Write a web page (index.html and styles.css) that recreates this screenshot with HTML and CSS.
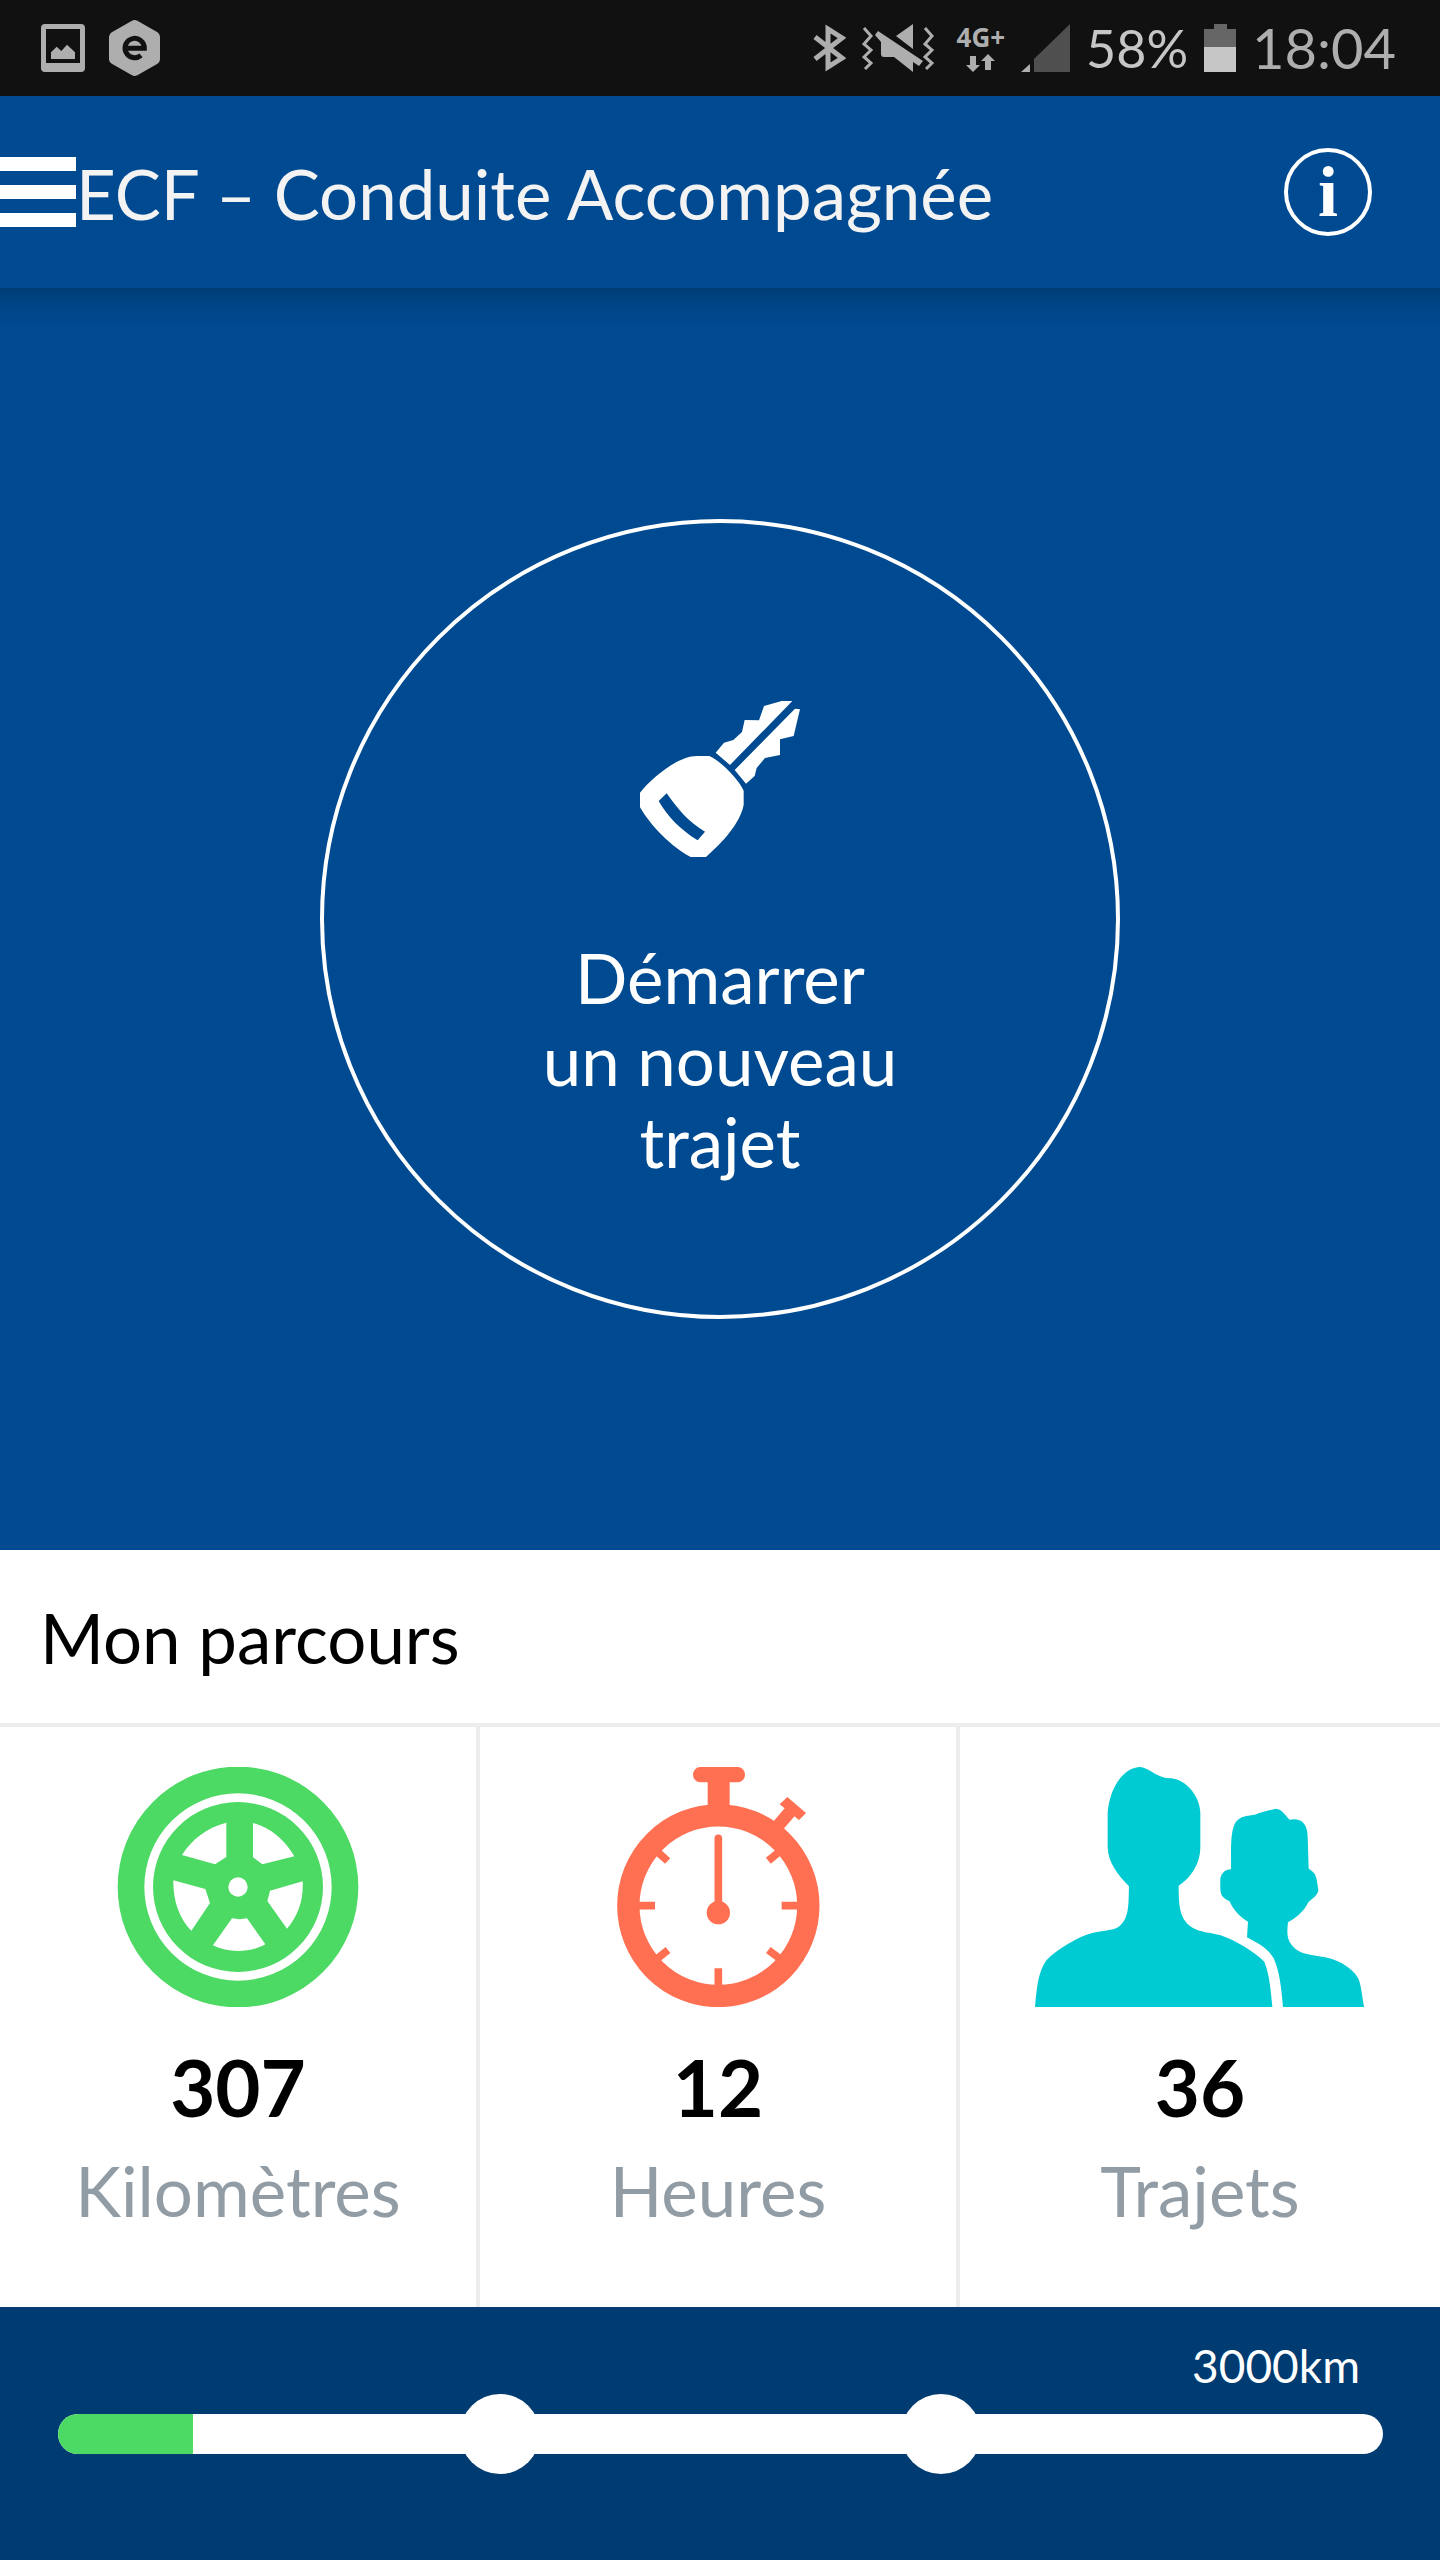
FILE: index.html
```html
<!DOCTYPE html>
<html lang="fr">
<head>
<meta charset="utf-8">
<meta name="viewport" content="width=device-width, initial-scale=1">
<title>ECF – Conduite Accompagnée</title>
<link rel="stylesheet" href="styles.css">
</head>
<body>
<div class="status">
  <div class="status-group status-left">
    <svg width="44" height="48" viewBox="123 72 132 144" aria-hidden="true">
      <path fill="#aeaeae" fill-rule="evenodd" d="M135 72H243Q255 72 255 84V204Q255 216 243 216H135Q123 216 123 204V84Q123 72 135 72ZM138 87V189H240V87Z"/>
      <path fill="#aeaeae" d="M153 177V157L170 140L184 153L201 134L225 157V177Z"/>
    </svg>
    <svg width="51" height="56" viewBox="327 60 153 168" aria-hidden="true">
      <path fill="#aeaeae" d="M396 62Q404 58 412 62L470 95Q480 101 480 112V176Q480 187 470 193L412 226Q404 230 396 226L338 193Q327 187 327 176V112Q327 101 338 95Z"/>
      <path fill="none" stroke="#111" stroke-width="15" d="M383 145H433A29 29 0 1 0 423 166"/>
    </svg>
  </div>
  <div class="status-group status-right">
    <svg width="33" height="48" viewBox="0 0 33 48" aria-hidden="true">
      <path fill="none" stroke="#aeaeae" stroke-width="5" d="M2 13L29 34L15 43V5L29 14L2 35"/>
    </svg>
    <svg width="73" height="48" viewBox="0 0 73 48" aria-hidden="true">
      <path fill="none" stroke="#aeaeae" stroke-width="3" d="M2 4L9 12L2 20L9 26L2 33L9 39L3 45M63 4L70 12L63 20L70 26L63 33L70 39L64 45"/>
      <path fill="#aeaeae" d="M51 0V25L34 12ZM16 7L61 37L57 42L51 38V48L32 33H22Q19 33 19 30V18L13 11Z"/>
    </svg>
    <div class="network">
      <span class="network-type">4G+</span>
      <svg width="29" height="18" viewBox="0 0 29 18" aria-hidden="true">
        <path fill="#aeaeae" d="M4 2H10V11H14L7 18L0 11H4ZM22 0L29 7H25V16H19V7H15Z"/>
      </svg>
    </div>
    <svg width="49" height="48" viewBox="0 0 49 48" aria-hidden="true">
      <path fill="#4f4f4f" d="M49 0V48H13V35Z"/><path fill="#aeaeae" d="M0 48L9 40V48Z"/>
    </svg>
    <span class="battery-level">58%</span>
    <svg width="32" height="48" viewBox="0 0 32 48" aria-hidden="true">
      <path fill="#666" d="M10 0H23V5H32V24H0V5H10Z"/><path fill="#c6c6c6" d="M0 23H32V48H0Z"/>
    </svg>
    <time class="clock">18:04</time>
  </div>
</div>

<header class="appbar">
  <button class="menu" type="button" aria-label="Menu">
    <svg width="76" height="70" viewBox="0 0 76 70" aria-hidden="true"><path fill="#fff" d="M0 0H76V14H0ZM0 28H76V42H0ZM0 56H76V70H0Z"/></svg>
  </button>
  <h1 class="title">ECF – Conduite Accompagnée</h1>
  <button class="info" type="button" aria-label="Informations">i</button>
</header>

<main class="main">
  <section class="hero">
    <button class="start" type="button">
      <svg width="160" height="156" viewBox="120 93 480 468" aria-hidden="true">
        <path fill="#fff" fill-rule="evenodd" d="M120 368C150 330 230 258 290 258H328C355 268 415 325 431 362V405C420 460 370 515 318 561H272C215 532 150 465 120 412ZM200 370L176 393C205 442 240 478 293 511L315 485C265 455 235 420 200 370Z"/>
        <path fill="#fff" d="M347 248L372 218L400 210L426 186L434 150L477 151L492 108L545 93H577L390 285ZM404 300L585 116L600 118L581 198L540 208V255L495 264L470 294L464 318L438 341Z"/>
      </svg>
      <span class="start-label">Démarrer<br>un nouveau<br>trajet</span>
    </button>
  </section>

  <section class="journey">
    <h2 class="journey-title">Mon parcours</h2>
    <ul class="stats">
      <li class="stat">
        <svg width="242" height="240" viewBox="52 51 726 720" aria-hidden="true">
          <circle cx="415" cy="411" r="321" fill="none" stroke="#4cd964" stroke-width="80"/>
          <circle cx="415" cy="411" r="255" fill="#4cd964"/>
          <path fill="#fff" d="M380 218V321L346 343L247 315C275 270 320 233 380 218ZM460 219C510 232 555 268 584 319L488 343L460 322ZM221 391L317 417L331 459L275 542C238 505 220 450 221 391ZM609 394C612 450 595 498 562 536L503 453L511 422ZM397 505Q420 510 442 505L497 583C450 609 385 609 340 586Z"/>
          <circle cx="415" cy="411" r="29" fill="#fff"/>
        </svg>
        <strong class="stat-value">307</strong>
        <span class="stat-label">Kilomètres</span>
      </li>
      <li class="stat">
        <svg width="204" height="240" viewBox="81 51 612 720" aria-hidden="true">
          <g fill="none" stroke="#ff7052">
            <ellipse cx="388" cy="467" rx="270" ry="271" stroke-width="67"/>
            <path stroke-width="23" d="M150 467H198M578 467H628M388 655V710M207 307L236 333M570 306L538 332M207 624L237 600M570 624L538 600"/>
            <path stroke-width="23" stroke-linecap="round" d="M388 265V480"/>
            <path stroke-width="38" d="M568 226L606 182"/>
          </g>
          <path fill="#ff7052" d="M334 51H446A22 23 0 0 1 446 97H422V180H356V97H334A22 23 0 0 1 334 51ZM595 141L651 189L630 210L572 163Z"/>
          <circle cx="388" cy="488" r="35" fill="#ff7052"/>
        </svg>
        <strong class="stat-value">12</strong>
        <span class="stat-label">Heures</span>
      </li>
      <li class="stat">
        <svg width="330" height="240" viewBox="78 51 990 720" aria-hidden="true">
          <path fill="#00cad2" d="M78 771C84 710 87 665 113 630C145 597 205 561 250 549C290 540 315 542 332 528C362 502 358 460 360 409C325 372 296 335 296 290V190C300 120 340 51 395 51C425 57 445 83 480 85C530 84 574 140 574 190V290C574 345 542 385 509 407C509 450 510 490 530 515C555 548 600 545 635 556C680 571 735 605 766 635C782 675 785 720 790 771Z"/>
          <path fill="#00cad2" d="M822 771C817 715 812 665 794 625C775 592 745 580 714 562L717 515C695 503 673 480 661 453C630 440 634 427 634 385C638 370 645 360 666 358C667 310 662 245 680 217C700 190 735 200 750 189L800 176C820 177 830 198 842 209C870 203 895 213 896 260L899 356C921 370 922 375 928 420C925 440 908 445 898 457C885 485 860 505 837 517C832 560 835 580 870 604C900 619 940 617 975 629C1010 642 1040 665 1050 690C1058 715 1060 745 1065 771Z"/>
        </svg>
        <strong class="stat-value">36</strong>
        <span class="stat-label">Trajets</span>
      </li>
    </ul>
  </section>
</main>

<footer class="goal">
  <span class="goal-label" id="goal-label">3000km</span>
  <div class="track" role="progressbar" aria-labelledby="goal-label" aria-valuemin="0" aria-valuemax="3000" aria-valuenow="307">
    <div class="track-clip"><div class="track-fill" style="width: 10.2%"></div></div>
    <span class="milestone milestone-first"></span>
    <span class="milestone milestone-second"></span>
  </div>
</footer>
</body>
</html>
```
FILE: styles.css
```css
*,
*::before,
*::after {
  box-sizing: border-box;
}

body {
  margin: 0;
  min-height: 100vh;
  display: flex;
  flex-direction: column;
  background: #004a91;
  color: #000;
  font-family: Lato, "Open Sans", sans-serif;
}

button {
  margin: 0;
  padding: 0;
  border: 0;
  background: none;
  color: inherit;
  font: inherit;
  cursor: pointer;
}

svg {
  display: block;
  flex: none;
}

/* System status bar */
.status {
  display: flex;
  justify-content: space-between;
  height: 96px;
  padding: 0 44px 0 41px;
  background: #111;
  color: #aeaeae;
  font-size: 52px;
  line-height: 96px;
}

.status-group {
  display: flex;
  align-items: center;
}

.status-left {
  gap: 24px;
}

.status-right {
  gap: 16px;
}

.network {
  display: flex;
  flex-direction: column;
  align-items: center;
  gap: 4px;
  margin-left: 6px;
}

.network-type {
  font: bold 26px/26px "Open Sans", sans-serif;
}

.battery-level {
  color: #c6c6c6;
}

.clock {
  font-size: 56px;
}

/* App bar */
.appbar {
  display: flex;
  align-items: center;
  height: 192px;
  padding-right: 68px;
  background: #004a91;
  color: #f3f3f3;
}

.title {
  flex: 1;
  margin: 0;
  padding-top: 4px;
  font-size: 69px;
  font-weight: 400;
  line-height: 80px;
}

.info {
  width: 88px;
  height: 88px;
  border: 4px solid #fff;
  border-radius: 50%;
  color: #fff;
  font: bold 72px/80px "Liberation Serif", serif;
}

/* Start button */
.main {
  flex: 1;
  display: flex;
  flex-direction: column;
}

/* The gradient is the shadow that the app bar casts */
.hero {
  flex: 1;
  display: flex;
  align-items: center;
  justify-content: center;
  padding: 80px 24px;
  background: linear-gradient(rgba(0, 0, 0, 0.18), rgba(0, 0, 0, 0.06) 20px, transparent 40px);
}

.start {
  display: flex;
  flex-direction: column;
  align-items: center;
  gap: 80px;
  width: 800px;
  max-width: 100%;
  aspect-ratio: 1;
  padding-top: 178px;
  border: 4px solid #fff;
  border-radius: 50%;
  color: #fff;
}

.start-label {
  font-size: 69px;
  line-height: 82px;
}

/* Journey figures */
.journey {
  background: #fff;
}

.journey-title {
  margin: 0;
  padding: 48px 40px 45px;
  border-bottom: 4px solid #ededed;
  font-size: 69px;
  font-weight: 400;
  line-height: 80px;
}

.stats {
  display: grid;
  grid-template-columns: repeat(3, 1fr);
  margin: 0;
  padding: 0;
  list-style: none;
}

.stat {
  display: flex;
  flex-direction: column;
  align-items: center;
  padding: 40px 0 76px;
  border-right: 4px solid #ededed;
}

.stat:last-child {
  border-right: 0;
}

.stat-value {
  margin-top: 40px;
  font-size: 78px;
  font-weight: 700;
  line-height: 80px;
}

.stat-label {
  margin-top: 24px;
  color: #919ca5;
  font-size: 69px;
  line-height: 80px;
}

/* Distance goal */
.goal {
  display: flex;
  flex-direction: column;
  gap: 20px;
  padding: 31px 57px 106px 58px;
  background: #003b72;
  color: #fff;
}

.goal-label {
  align-self: flex-end;
  padding-right: 23px;
  font-size: 46px;
  line-height: 56px;
}

.track {
  position: relative;
  height: 40px;
  border-radius: 20px;
  background: #fff;
}

.track-clip {
  height: 100%;
  border-radius: 20px;
  overflow: hidden;
}

.track-fill {
  height: 100%;
  background: #4cd964;
}

.milestone {
  position: absolute;
  top: -20px;
  width: 80px;
  height: 80px;
  margin-left: -40px;
  border-radius: 50%;
  background: #fff;
}

.milestone-first {
  left: 33.3333%;
}

.milestone-second {
  left: 66.6667%;
}
```
